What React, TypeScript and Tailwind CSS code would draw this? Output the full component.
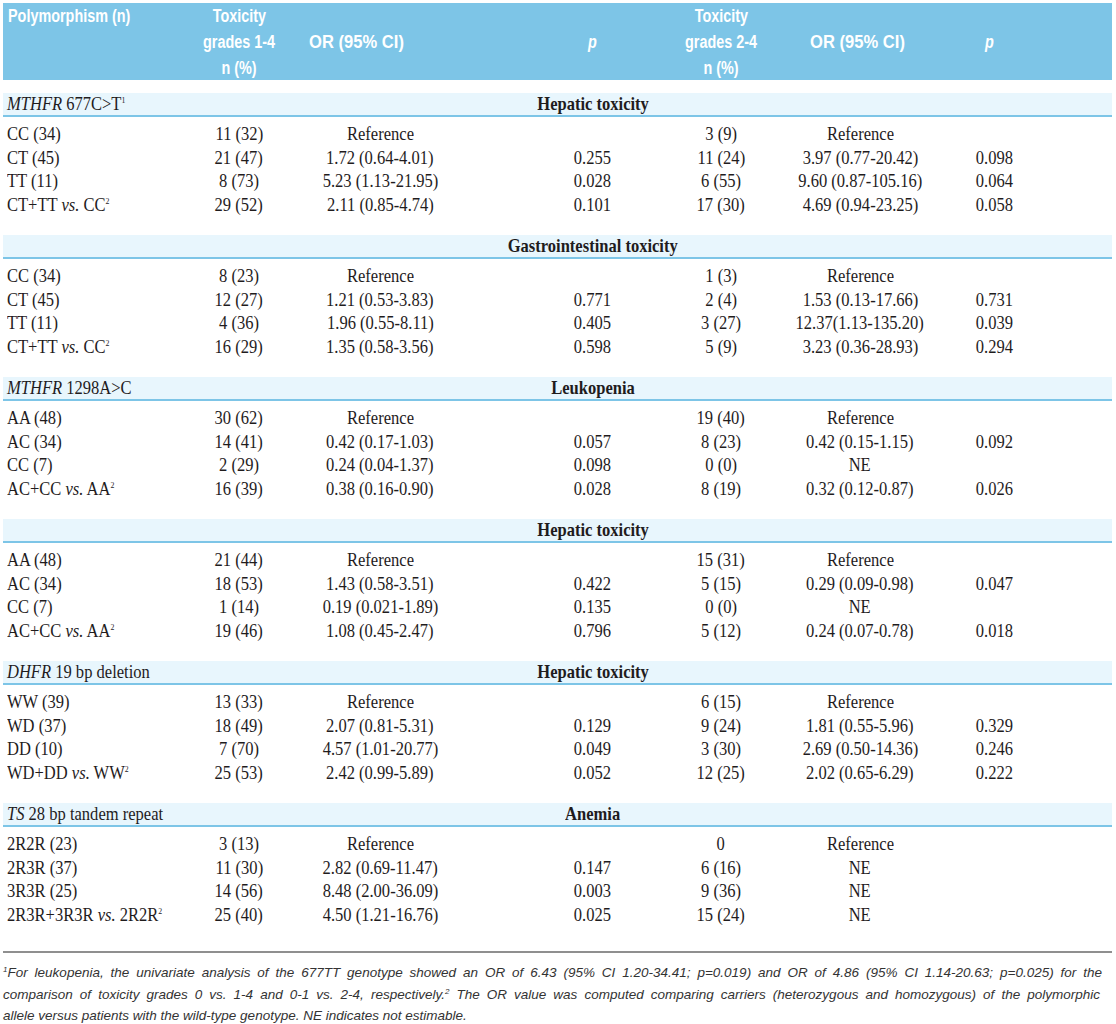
import type { ReactNode } from "react";

type Row = [ReactNode, string, string, string, string, string, string];

interface Section {
  label?: ReactNode;
  title: string;
  rows: Row[];
}

const grid = "grid grid-cols-[167px_138px_144px_78px_124px_134px_144px_124px_1fr]";

// condensed look: Liberation Serif squeezed horizontally
function T({ children, left }: { children: ReactNode; left?: boolean }) {
  return (
    <span className={`inline-block whitespace-nowrap scale-x-[0.87] ${left ? "origin-left" : "origin-center"}`}>
      {children}
    </span>
  );
}

function Sup({ n }: { n: string }) {
  return <sup className="text-[9px] relative -top-[7px]">{n}</sup>;
}

function Vs({ a, b }: { a: string; b: string }) {
  return (
    <>
      {a} <i>vs.</i> {b}
      <Sup n="2" />
    </>
  );
}

const sections: Section[] = [
  {
    label: (
      <>
        <i>MTHFR</i> 677C&gt;T<Sup n="1" />
      </>
    ),
    title: "Hepatic toxicity",
    rows: [
      ["CC (34)", "11 (32)", "Reference", "", "3 (9)", "Reference", ""],
      ["CT (45)", "21 (47)", "1.72 (0.64-4.01)", "0.255", "11 (24)", "3.97 (0.77-20.42)", "0.098"],
      ["TT (11)", "8 (73)", "5.23 (1.13-21.95)", "0.028", "6 (55)", "9.60 (0.87-105.16)", "0.064"],
      [<Vs a="CT+TT" b="CC" />, "29 (52)", "2.11 (0.85-4.74)", "0.101", "17 (30)", "4.69 (0.94-23.25)", "0.058"],
    ],
  },
  {
    title: "Gastrointestinal toxicity",
    rows: [
      ["CC (34)", "8 (23)", "Reference", "", "1 (3)", "Reference", ""],
      ["CT (45)", "12 (27)", "1.21 (0.53-3.83)", "0.771", "2 (4)", "1.53 (0.13-17.66)", "0.731"],
      ["TT (11)", "4 (36)", "1.96 (0.55-8.11)", "0.405", "3 (27)", "12.37(1.13-135.20)", "0.039"],
      [<Vs a="CT+TT" b="CC" />, "16 (29)", "1.35 (0.58-3.56)", "0.598", "5 (9)", "3.23 (0.36-28.93)", "0.294"],
    ],
  },
  {
    label: (
      <>
        <i>MTHFR</i> 1298A&gt;C
      </>
    ),
    title: "Leukopenia",
    rows: [
      ["AA (48)", "30 (62)", "Reference", "", "19 (40)", "Reference", ""],
      ["AC (34)", "14 (41)", "0.42 (0.17-1.03)", "0.057", "8 (23)", "0.42 (0.15-1.15)", "0.092"],
      ["CC (7)", "2 (29)", "0.24 (0.04-1.37)", "0.098", "0 (0)", "NE", ""],
      [<Vs a="AC+CC" b="AA" />, "16 (39)", "0.38 (0.16-0.90)", "0.028", "8 (19)", "0.32 (0.12-0.87)", "0.026"],
    ],
  },
  {
    title: "Hepatic toxicity",
    rows: [
      ["AA (48)", "21 (44)", "Reference", "", "15 (31)", "Reference", ""],
      ["AC (34)", "18 (53)", "1.43 (0.58-3.51)", "0.422", "5 (15)", "0.29 (0.09-0.98)", "0.047"],
      ["CC (7)", "1 (14)", "0.19 (0.021-1.89)", "0.135", "0 (0)", "NE", ""],
      [<Vs a="AC+CC" b="AA" />, "19 (46)", "1.08 (0.45-2.47)", "0.796", "5 (12)", "0.24 (0.07-0.78)", "0.018"],
    ],
  },
  {
    label: (
      <>
        <i>DHFR</i> 19 bp deletion
      </>
    ),
    title: "Hepatic toxicity",
    rows: [
      ["WW (39)", "13 (33)", "Reference", "", "6 (15)", "Reference", ""],
      ["WD (37)", "18 (49)", "2.07 (0.81-5.31)", "0.129", "9 (24)", "1.81 (0.55-5.96)", "0.329"],
      ["DD (10)", "7 (70)", "4.57 (1.01-20.77)", "0.049", "3 (30)", "2.69 (0.50-14.36)", "0.246"],
      [<Vs a="WD+DD" b="WW" />, "25 (53)", "2.42 (0.99-5.89)", "0.052", "12 (25)", "2.02 (0.65-6.29)", "0.222"],
    ],
  },
  {
    label: (
      <>
        <i>TS</i> 28 bp tandem repeat
      </>
    ),
    title: "Anemia",
    rows: [
      ["2R2R (23)", "3 (13)", "Reference", "", "0", "Reference", ""],
      ["2R3R (37)", "11 (30)", "2.82 (0.69-11.47)", "0.147", "6 (16)", "NE", ""],
      ["3R3R (25)", "14 (56)", "8.48 (2.00-36.09)", "0.003", "9 (36)", "NE", ""],
      [<Vs a="2R3R+3R3R" b="2R2R" />, "25 (40)", "4.50 (1.21-16.76)", "0.025", "15 (24)", "NE", ""],
    ],
  },
];

function H({ children, wide }: { children: ReactNode; wide?: boolean }) {
  return (
    <span className={`inline-block whitespace-nowrap origin-center ${wide ? "scale-x-[0.92]" : "scale-x-[0.8]"}`}>
      {children}
    </span>
  );
}

function HeaderRow() {
  return (
    <div
      className={`${grid} h-[77px] bg-[#7dc5e7] text-white font-bold text-[18px] leading-[26px] font-['Liberation_Sans',sans-serif]`}
    >
      <div className="pl-[5px]">
        <span className="inline-block whitespace-nowrap scale-x-[0.8] origin-left">Polymorphism (n)</span>
      </div>
      <div className="flex flex-col items-center justify-center">
        <H>Toxicity</H>
        <H>grades 1-4</H>
        <H>n (%)</H>
      </div>
      <div className="flex items-center justify-center pr-[46px]">
        <H wide>OR (95% CI)</H>
      </div>
      <div />
      <div className="flex items-center justify-center italic">
        <H>p</H>
      </div>
      <div className="flex flex-col items-center justify-center">
        <H>Toxicity</H>
        <H>grades 2-4</H>
        <H>n (%)</H>
      </div>
      <div className="flex items-center justify-center pr-[4px]">
        <H wide>OR (95% CI)</H>
      </div>
      <div className="flex items-center justify-center pr-[10px] italic">
        <H>p</H>
      </div>
      <div />
    </div>
  );
}

function SectionBlock({ s }: { s: Section }) {
  return (
    <div>
      <div className="flex h-[24px] pt-[1px] items-center bg-[#e8f6fd] border-b-2 border-[#7dc5e7]">
        <div className="w-[167px] pl-[4px]">{s.label && <T left>{s.label}</T>}</div>
        <div className="w-[846px] flex justify-center font-bold">
          <T>{s.title}</T>
        </div>
      </div>
      <div className="pt-[5px] pb-[19px]">
        {s.rows.map((r, i) => (
          <div key={i} className={`${grid} h-[23.5px] leading-[23.5px]`}>
            <div className="pl-[4px]">
              <T left>{r[0]}</T>
            </div>
            <div className="flex justify-center"><T>{r[1]}</T></div>
            <div className="flex justify-center"><T>{r[2]}</T></div>
            <div />
            <div className="flex justify-center"><T>{r[3]}</T></div>
            <div className="flex justify-center"><T>{r[4]}</T></div>
            <div className="flex justify-center"><T>{r[5]}</T></div>
            <div className="flex justify-center"><T>{r[6]}</T></div>
            <div />
          </div>
        ))}
      </div>
    </div>
  );
}

export default function App() {
  return (
    <div className="w-[1116px] h-[1024px] bg-white px-[3px] pt-[3px] text-[#1f1c1d]">
      <div className="w-[1109px]">
        <HeaderRow />
        <div className="mt-[13px] font-['Liberation_Serif',serif] text-[19px]">
          {sections.map((s, i) => (
            <SectionBlock key={i} s={s} />
          ))}
        </div>
        <div className="mt-[6px] h-[2px] bg-[#8f8f8f]" />
        <div className="mt-[9px] font-['Liberation_Sans',sans-serif] italic text-[13.5px] leading-[21.7px] text-[#333]">
          <div className="text-justify [text-align-last:justify] pr-[10px]">
            <sup className="text-[8px] relative -top-[5px]">1</sup>For leukopenia, the univariate analysis of the 677TT
            genotype showed an OR of 6.43 (95% CI 1.20-34.41; p=0.019) and OR of 4.86 (95% CI 1.14-20.63; p=0.025) for
            the
          </div>
          <div className="text-justify [text-align-last:justify] pr-[12px]">
            comparison of toxicity grades 0 vs. 1-4 and 0-1 vs. 2-4, respectively.
            <sup className="text-[8px] relative -top-[5px]">2</sup> The OR value was computed comparing carriers
            (heterozygous and homozygous) of the polymorphic
          </div>
          <div>allele versus patients with the wild-type genotype. NE indicates not estimable.</div>
        </div>
      </div>
    </div>
  );
}
